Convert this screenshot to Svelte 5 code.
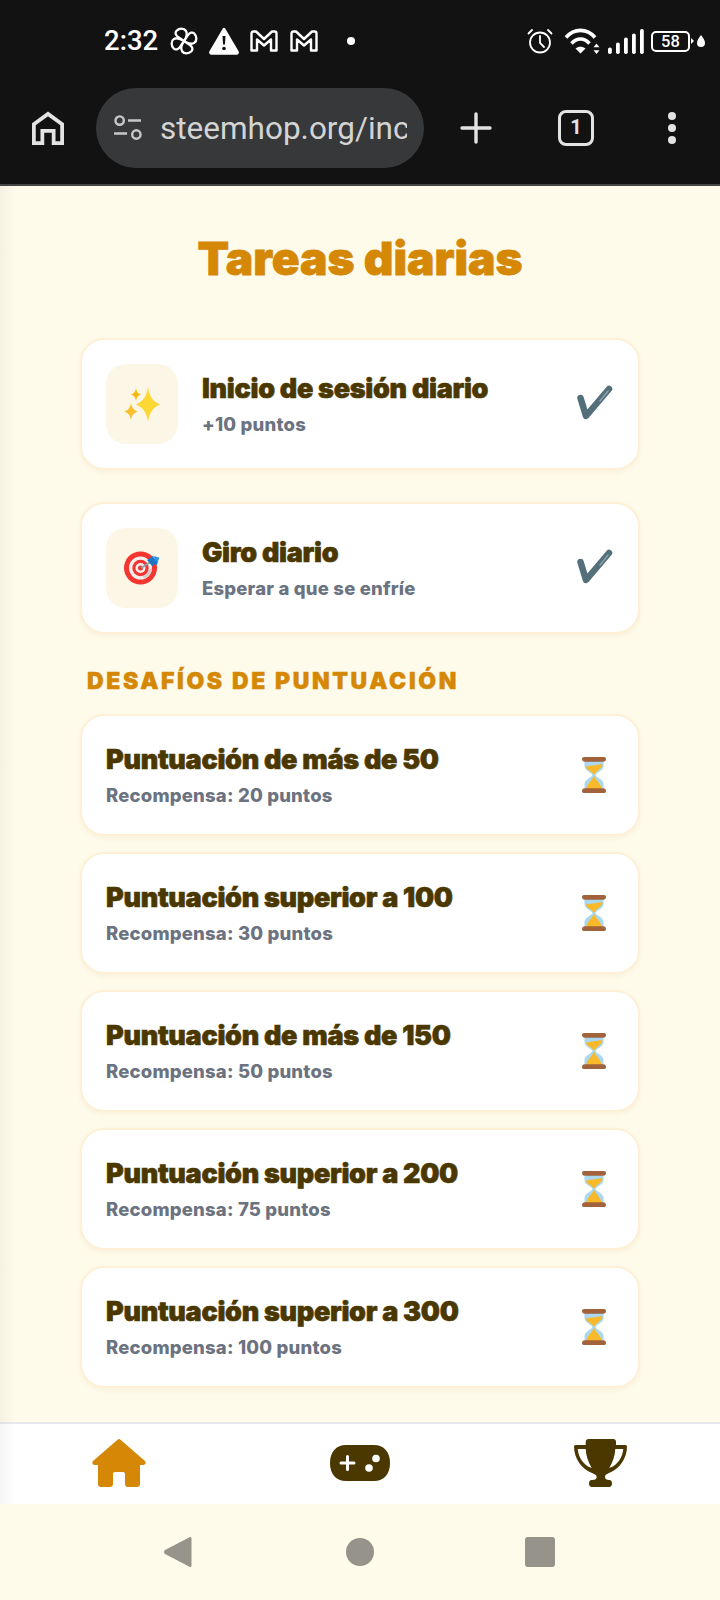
<script>
  const daily = [
    { icon: 'sparkles', title: 'Inicio de sesión diario', sub: '+10 puntos' },
    { icon: 'target', title: 'Giro diario', sub: 'Esperar a que se enfríe' }
  ];
  const challenges = [
    { title: 'Puntuación de más de 50', sub: 'Recompensa: 20 puntos' },
    { title: 'Puntuación superior a 100', sub: 'Recompensa: 30 puntos' },
    { title: 'Puntuación de más de 150', sub: 'Recompensa: 50 puntos' },
    { title: 'Puntuación superior a 200', sub: 'Recompensa: 75 puntos' },
    { title: 'Puntuación superior a 300', sub: 'Recompensa: 100 puntos' }
  ];
</script>

<div class="screen">
  <header class="chrome">
    <div class="status">
      <span class="time">2:32</span>
      <svg class="s-pin" viewBox="0 0 30 30" fill="none" stroke="#fff" stroke-width="2.500" stroke-linejoin="round"><path d="M15 15 9 11C6 9 5 6 7 4c3-3 8-3 10 0 2 3 0 8-2 11zM15 15l4-6c2-3 5-4 7-2 3 3 3 8 0 10-3 2-8 0-11-2zM15 15l6 4c3 2 4 5 2 7-3 3-8 3-10 0-2-3 0-8 2-11zM15 15l-4 6c-2 3-5 4-7 2-3-3-3-8 0-10 3-2 8 0 11 2z"/></svg>
      <svg class="s-warn" viewBox="0 0 30 28"><path d="M15 2 28.500 25a1 1 0 0 1-1 1.500H2.500a1 1 0 0 1-1-1.500z" fill="#fff" stroke="#fff" stroke-linejoin="round" stroke-width="2.500"/><path d="M13.500 9h3l-.5 8.500h-2z" fill="#121212"/><circle cx="15" cy="21.500" r="1.800" fill="#121212"/></svg>
      <svg class="s-m" viewBox="0 0 28 22" fill="none" stroke="#fff" stroke-width="2.400" stroke-linejoin="round"><path d="M1.500 3.500Q1.500 1.500 3.500 1.500H6L14 9 22 1.500h2.500Q26.500 1.500 26.500 3.500V20.500H21V9.500L14 15.500 7 9.500V20.500H1.500z"/></svg>
      <svg class="s-m" viewBox="0 0 28 22" fill="none" stroke="#fff" stroke-width="2.400" stroke-linejoin="round"><path d="M1.500 3.500Q1.500 1.500 3.500 1.500H6L14 9 22 1.500h2.500Q26.500 1.500 26.500 3.500V20.500H21V9.500L14 15.500 7 9.500V20.500H1.500z"/></svg>
      <span class="dot"></span>
      <span class="grow"></span>
      <svg class="s-alarm" viewBox="0 0 26 26" fill="none" stroke="#fff" stroke-width="1.800" stroke-linecap="round"><circle cx="13" cy="14.500" r="10"/><path d="M13 8v7l4 4M1.500 5.500l3.500-3.500M24.500 5.500 21 2"/></svg>
      <svg class="s-wifi" viewBox="0 0 36 26"><path d="M2 9.500C10 0 23 0 31 9.500M7.500 15.500C13 9.500 20 9.500 25.500 15.500" fill="none" stroke="#fff" stroke-width="3.600"/><path d="M11.500 20.500c3-2.500 7-2.500 10 0l-5 5z" fill="#fff"/><path d="M32.500 15.500l3 3.800h-6zM32.500 26l-3-3.800h6z" fill="#fff"/></svg>
      <svg class="s-signal" viewBox="0 0 36 25" fill="#fff"><rect x="0" y="18.500" width="3.800" height="6.500" rx="1.800"/><rect x="8" y="13.500" width="3.800" height="11.500" rx="1.800"/><rect x="16" y="8.500" width="3.800" height="16.500" rx="1.800"/><rect x="24" y="4.500" width="3.800" height="20.500" rx="1.800"/><rect x="32" y="0" width="3.800" height="25" rx="1.800"/></svg>
      <span class="battery">58</span>
      <svg class="s-tip" viewBox="0 0 14 14" fill="#fff"><path d="M0 4l3 3-3 3z"/><path d="M10 1c2 3 4 5 4 8a4 4 0 0 1-8 0c0-3 2-5 4-8z"/></svg>
    </div>

    <div class="toolbar">
      <svg class="t-home" viewBox="0 0 34 36" fill="none" stroke="#e3e3e3" stroke-width="4"><path d="M2 34V14L17 3l15 11v20h-9V21H11v13z"/></svg>
      <div class="urlbar">
        <svg class="t-tune" viewBox="0 0 32 28" fill="none" stroke="#c8c8c8" stroke-width="2.600"><circle cx="7" cy="6" r="4.500"/><path d="M16 6h14M1 20h14"/><circle cx="25" cy="21" r="4.500"/></svg>
        <span class="url">steemhop.org/inc</span>
      </div>
      <svg class="t-plus" viewBox="0 0 32 32" stroke="#e3e3e3" stroke-width="3.400" stroke-linecap="round"><path d="M16 2v28M2 16h28"/></svg>
      <span class="tabs">1</span>
      <span class="kebab"><i></i><i></i><i></i></span>
    </div>
  </header>

  <main class="page">
    <h1>Tareas diarias</h1>

    {#each daily as d, i}
      <section class="card daily" class:second={i === 1}>
        <div class="tile">
          {#if d.icon === 'sparkles'}
            <svg class="emoji-s" viewBox="0 0 36 35">
              <path d="M24 0C25.500 9 28 14 36 17.500 28 21 25.500 26 24 35 22.500 26 20 21 12 17.500 20 14 22.500 9 24 0z" fill="#fdd835"/>
              <path d="M12 1C12.800 5 14 6.500 17 7.500 14 8.500 12.800 10 12 14 11.200 10 10 8.500 7 7.500 10 6.500 11.200 5 12 1z" fill="#f5b914"/>
              <path d="M7 16C8 21 9.500 23 14 24.500 9.500 26 8 28 7 33 6 28 4.500 26 0 24.500 4.500 23 6 21 7 16z" fill="#fbc02d"/>
            </svg>
          {:else}
            <svg class="emoji-t" viewBox="0 0 36 34">
              <circle cx="16.500" cy="17" r="16.500" fill="#f43530"/>
              <path d="M16.500 5.500a11.500 11.500 0 1 0 0 23 11.500 11.500 0 0 0 0-23z" fill="#f7efec"/>
              <path d="M28 17a11.500 11.500 0 0 1-8 11l-2-5z" fill="#d9cdca"/>
              <circle cx="16.500" cy="17" r="8.200" fill="#f43530"/>
              <circle cx="16.500" cy="17" r="5" fill="#f7efec"/>
              <circle cx="16.500" cy="17" r="2.500" fill="#e53935"/>
              <path d="M17 17l9-5.500" stroke="#8fa3ad" stroke-width="2"/>
              <path d="M23 9l6-4 1 3 5-1.500L33 14l-3.500-1 -1 2.500z" fill="#1d76c4"/>
              <path d="M29 5l6 1.500-2 6z" fill="#2c93e6"/>
            </svg>
          {/if}
        </div>
        <div class="text">
          <div class="title">{d.title}</div>
          <div class="sub">{d.sub}</div>
        </div>
        <svg class="check" viewBox="0 0 38 38">
          <path d="M4.500 14 10 32 33 5" fill="none" stroke="#546e7a" stroke-width="6.500" stroke-linecap="round" stroke-linejoin="round"/>
          <path d="M24 17l8-10" fill="none" stroke="#8aa2ad" stroke-width="1.500" stroke-linecap="round"/>
        </svg>
      </section>
    {/each}

    <h2>Desafíos de puntuación</h2>

    <div class="list">
      {#each challenges as c}
        <section class="card challenge">
          <div class="text">
            <div class="title">{c.title}</div>
            <div class="sub">{c.sub}</div>
          </div>
          <svg class="glass" viewBox="0 0 24 36">
            <path d="M2.500 3h19v6c0 5-7 6-8 9 1 3 8 4 8 9v6h-19v-6c0-5 7-6 8-9-1-3-8-4-8-9z" fill="#a9d8f0"/>
            <path d="M4 9.500 20.500 7c0 5-6.500 6-7.500 10h-2C10.500 14 4.500 14 4 9.500z" fill="#f9b928"/>
            <path d="M12 18c1 5 6 7 8 14H4c2-7 7-9 8-14z" fill="#f9b928"/>
            <path d="M0 1.800C0 .5 1 0 3 0h18c2 0 3 .5 3 1.800 0 2-1 3-3 3H3c-2 0-3-1-3-3z" fill="#a1623c"/>
            <path d="M0 34.200c0 1.300 1 1.800 3 1.800h18c2 0 3-.5 3-1.800 0-2-1-3-3-3H3c-2 0-3 1-3 3z" fill="#a1623c"/>
          </svg>
        </section>
      {/each}
    </div>
  </main>

  <nav class="tabbar">
    <svg class="n-home" viewBox="0 0 54 48"><path d="M25.500.8c.8-1 2.200-1 3 0L53 22c1.500 2 .5 4-2 4h-3v19c0 1.800-1.200 3-3 3h-9c-1.800 0-3-1.200-3-3V35c0-1.200-.8-2-2-2h-8c-1.200 0-2 .8-2 2v10c0 1.800-1.200 3-3 3H9c-1.800 0-3-1.200-3-3V26H3c-2.500 0-3.500-2-2-4z" fill="#d48806"/></svg>
    <svg class="n-pad" viewBox="0 0 60 36"><path d="M16 0h28c10 0 16 7 16 18s-6 18-16 18H16C6 36 0 29 0 18S6 0 16 0z" fill="#4a3800"/><path d="M17.500 11.500v13M11 18h13" stroke="#fff" stroke-width="3" stroke-linecap="round"/><circle cx="46" cy="13.500" r="3.800" fill="#fff"/><circle cx="39" cy="23" r="3.800" fill="#fff"/></svg>
    <svg class="n-cup" viewBox="0 0 55 48"><path d="M12.700 3Q12.700 0 15.700 0H40Q43 0 43 3V6H52.500Q54 6 54 7.500C54 20 46 30 36 34 33 35.500 32 36 32 38 32 40 33.500 41 36 41H36.500C38 41 39 42.500 39 44.500 39 46.500 38 48 36 48H19C17 48 16 46.500 16 44.500 16 42.500 17 41 18.500 41H19.500C22 41 23.700 40 23.700 38 23.700 36 22 35.500 19 34 9 30 1 20 1 7.500Q1 6 2.500 6H12.700Z" fill="#4a3800"/><path d="M4.700 10H12.700C13 16 15 23 18.700 29 10 26 5.500 18 4.700 10ZM50.300 10H42.300C42 16 40 23 36.300 29 45 26 49.500 18 50.300 10Z" fill="#fff"/></svg>
  </nav>

  <footer class="android">
    <svg class="a-back" viewBox="0 0 28 32"><path d="M26 1c1 0 1.500.5 1.500 1.500v27c0 1-.5 1.500-1.500 1.500L1 18c-1.300-1-1.300-3 0-4z" fill="#95938a"/></svg>
    <span class="a-circle"></span>
    <span class="a-square"></span>
  </footer>

  <div class="edge"></div>
</div>

<style>
  :global(body) {
    margin: 0;
    background: #fffbeb;
  }

  .screen {
    position: relative;
    width: 720px;
    height: 1600px;
    display: flex;
    flex-direction: column;
    overflow: hidden;
    font-family: "Inter", "Liberation Sans", sans-serif;
    background: #fffbeb;
  }

  .chrome {
    height: 184px;
    flex: none;
    background: #121212;
    border-bottom: 2px solid #444;
    display: flex;
    flex-direction: column;
    font-family: "Roboto", sans-serif;
  }

  .status {
    height: 82px;
    display: flex;
    align-items: center;
    padding: 0 15px 2px 104px;
    color: #fff;
  }

  .time {
    font-size: 27.500px;
    font-weight: 500;
    width: 66px;
    margin-top: -1px;
  }

  .s-pin { width: 28px; height: 28px; margin-right: 11px; }
  .s-warn { width: 30px; height: 28px; margin-right: 11px; }
  .s-m { width: 28px; height: 22px; margin-right: 12px; }
  .dot { width: 8px; height: 8px; border-radius: 50%; background: #fff; margin-left: 17px; }
  .grow { flex: 1; }
  .s-alarm { width: 26px; height: 26px; margin-right: 11px; }
  .s-wifi { width: 36px; height: 26px; margin-right: 8px; }
  .s-signal { width: 36px; height: 25px; margin-right: 7px; }

  .battery {
    box-sizing: border-box;
    width: 39px;
    height: 21px;
    border: 2px solid #fff;
    border-radius: 5px;
    font-size: 16.500px;
    font-weight: 500;
    line-height: 17px;
    text-align: center;
  }

  .s-tip { width: 14px; height: 14px; margin-left: 1px; }

  .toolbar {
    height: 88px;
    display: flex;
    align-items: center;
    padding-left: 32px;
  }

  .t-home { width: 32px; height: 36px; flex: none; margin-right: 32px; }

  .urlbar {
    box-sizing: border-box;
    width: 328px;
    height: 80px;
    border-radius: 40px;
    background: #37383a;
    display: flex;
    align-items: center;
    padding-left: 17px;
    overflow: hidden;
  }

  .t-tune { width: 30px; height: 26px; flex: none; margin-right: 17px; }

  .url {
    color: #d4d4d4;
    font-size: 31.500px;
    white-space: nowrap;
    width: 247px;
    overflow: hidden;
  }

  .t-plus { width: 32px; height: 32px; flex: none; margin-left: 36px; }

  .tabs {
    box-sizing: border-box;
    width: 36px;
    height: 36px;
    border: 3.500px solid #e3e3e3;
    border-radius: 8px;
    color: #e3e3e3;
    font-size: 20px;
    font-weight: 700;
    line-height: 29px;
    text-align: center;
    margin-left: 66px;
  }

  .kebab {
    display: flex;
    flex-direction: column;
    gap: 4px;
    margin-left: 74px;
  }

  .kebab i {
    width: 8px;
    height: 8px;
    border-radius: 50%;
    background: #e3e3e3;
  }

  .page {
    flex: 1;
    min-height: 0;
    padding: 0 80px;
  }

  h1 {
    margin: 42px 0 50px;
    text-align: center;
    color: #d48806;
    font-size: 46px;
    line-height: 60px;
    font-weight: 900;
    -webkit-text-stroke: 0.8px #d48806;
  }

  .card {
    box-sizing: border-box;
    background: #fff;
    border: 2px solid #fdf0d5;
    border-radius: 24px;
    box-shadow: 0 2px 5px rgba(150, 120, 40, 0.08);
    display: flex;
    align-items: center;
  }

  .daily {
    height: 132px;
    padding: 0 24px;
  }

  .daily.second { margin-top: 32px; }

  .tile {
    width: 72px;
    height: 80px;
    flex: none;
    border-radius: 20px;
    background: #fcf6e6;
    display: flex;
    align-items: center;
    justify-content: center;
    margin-right: 24px;
  }

  .emoji-s { width: 36px; height: 35px; }
  .emoji-t { width: 36px; height: 34px; }

  .text { flex: 1; min-width: 0; }

  .title {
    color: #4a3800;
    font-size: 27px;
    line-height: 33px;
    font-weight: 900;
    letter-spacing: -0.3px;
    white-space: nowrap;
    -webkit-text-stroke: 0.6px #4a3800;
  }

  .sub {
    color: #6b7280;
    font-size: 18.500px;
    line-height: 26px;
    font-weight: 800;
    letter-spacing: 0.2px;
    white-space: nowrap;
    margin-top: 6px;
  }

  .check { width: 38px; height: 38px; flex: none; margin-top: -2px; }

  h2 {
    margin: 29px 0 15px;
    padding-left: 7px;
    color: #d48806;
    font-size: 23px;
    line-height: 36px;
    font-weight: 900;
    letter-spacing: 2.600px;
    text-transform: uppercase;
    -webkit-text-stroke: 0.4px #d48806;
  }

  .list {
    display: flex;
    flex-direction: column;
    gap: 16px;
  }

  .challenge {
    height: 122px;
    padding: 0 24px;
  }

  .glass { width: 24px; height: 36px; flex: none; margin-right: 8px; }

  .tabbar {
    height: 82px;
    flex: none;
    box-sizing: border-box;
    background: #fff;
    border-top: 2px solid #e8e8ec;
    display: flex;
    align-items: center;
    padding: 0 0 2px 92px;
  }

  .n-home { width: 54px; height: 48px; margin-right: 184px; }
  .n-pad { width: 60px; height: 36px; margin-right: 183px; }
  .n-cup { width: 55px; height: 48px; }

  .android {
    height: 96px;
    flex: none;
    background: #fffbeb;
    display: flex;
    align-items: center;
    padding-left: 164px;
  }

  .a-back { width: 28px; height: 32px; margin-right: 154px; }

  .a-circle {
    width: 28px;
    height: 28px;
    border-radius: 50%;
    background: #95938a;
    margin-right: 151px;
  }

  .a-square {
    width: 30px;
    height: 30px;
    border-radius: 3px;
    background: #95938a;
  }

  .edge {
    position: absolute;
    left: 0;
    top: 186px;
    width: 16px;
    height: 1318px;
    background: linear-gradient(90deg, rgba(120, 120, 120, 0.07), rgba(120, 120, 120, 0));
    pointer-events: none;
  }
</style>
